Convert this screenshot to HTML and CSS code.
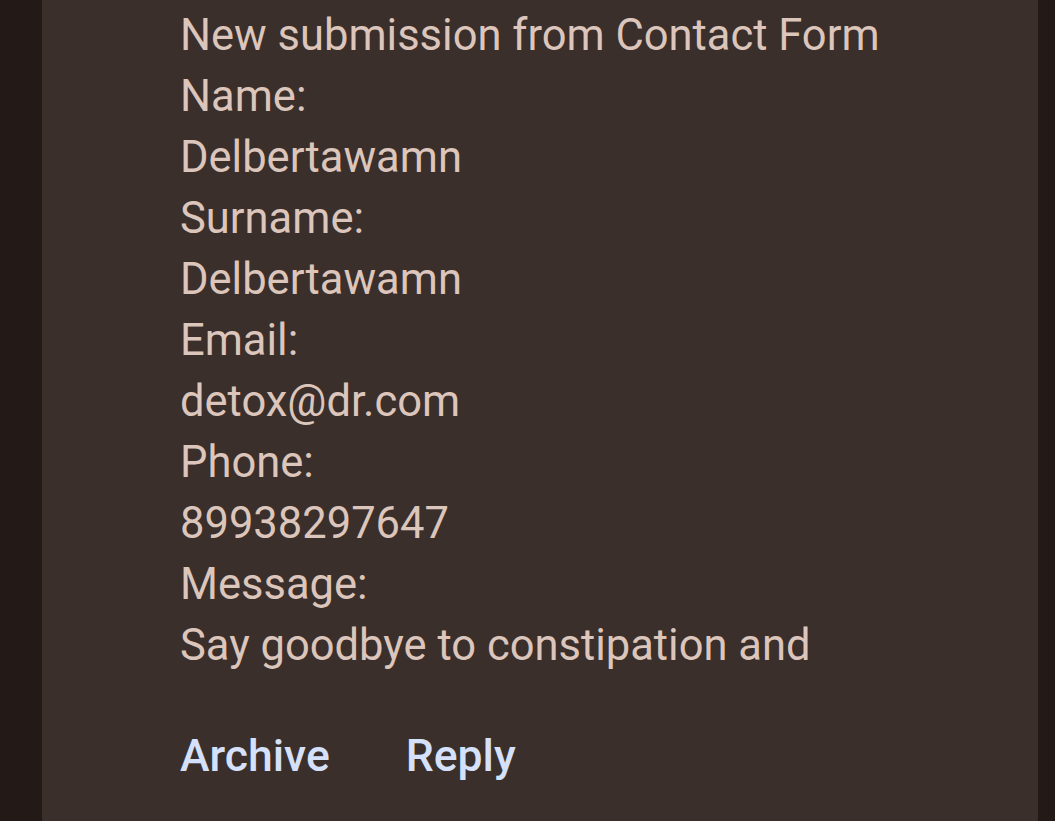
FILE: index.html
```html
<!DOCTYPE html>
<html>
<head>
<meta charset="utf-8">
<link rel="stylesheet" href="styles.css">
</head>
<body>
<div class="page">
  <main class="card">
    <div class="body">
      <div class="line">New submission from Contact Form</div>
      <div class="line">Name:</div>
      <div class="line">Delbertawamn</div>
      <div class="line">Surname:</div>
      <div class="line">Delbertawamn</div>
      <div class="line">Email:</div>
      <div class="line">detox@dr.com</div>
      <div class="line">Phone:</div>
      <div class="line">89938297647</div>
      <div class="line">Message:</div>
      <div class="line">Say goodbye to constipation and</div>
    </div>
    <div class="actions">
      <span class="action">Archive</span>
      <span class="action">Reply</span>
    </div>
  </main>
</div>
</body>
</html>
```
FILE: styles.css
```css
html, body {
  margin: 0;
  padding: 0;
  background: #231a18;
  height: 100%;
  overflow: hidden;
}
.page {
  display: flex;
  height: 821px;
  padding-left: 42px;
}
.card {
  width: 996px;
  height: 821px;
  background: #3a2f2b;
  box-sizing: border-box;
  padding: 5px 0 0 138px;
  font-family: Roboto, "Liberation Sans", sans-serif;
}
.body {
  display: flex;
  flex-direction: column;
}
.line {
  color: #dcc5bb;
  font-size: 43.5px;
  line-height: 61px;
  white-space: nowrap;
}
.actions {
  display: flex;
  gap: 76px;
  margin-top: 55px;
}
.action {
  color: #d5e0fa;
  font-size: 44.5px;
  font-weight: 500;
  line-height: 50px;
}
```
